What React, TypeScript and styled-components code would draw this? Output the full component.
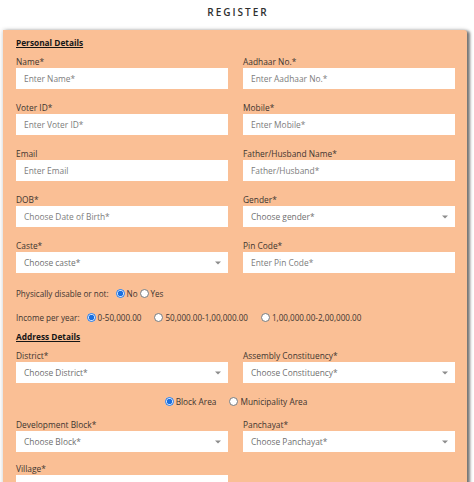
import * as React from "react";
import styled, { createGlobalStyle } from "styled-components";

const GlobalStyle = createGlobalStyle`
  html, body {
    margin: 0;
    padding: 0;
    background: #ffffff;
    font-family: "Open Sans", "Noto Sans", "Liberation Sans", sans-serif;
  }
`;

type FieldDef = { label: string; placeholder: string; select?: boolean };

const personal: FieldDef[] = [
  { label: "Name*", placeholder: "Enter Name*" },
  { label: "Aadhaar No.*", placeholder: "Enter Aadhaar No.*" },
  { label: "Voter ID*", placeholder: "Enter Voter ID*" },
  { label: "Mobile*", placeholder: "Enter Mobile*" },
  { label: "Email", placeholder: "Enter Email" },
  { label: "Father/Husband Name*", placeholder: "Father/Husband*" },
  { label: "DOB*", placeholder: "Choose Date of Birth*" },
  { label: "Gender*", placeholder: "Choose gender*", select: true },
  { label: "Caste*", placeholder: "Choose caste*", select: true },
  { label: "Pin Code*", placeholder: "Enter Pin Code*" },
];

const incomes = ["0-50,000.00", "50,000.00-1,00,000.00", "1,00,000.00-2,00,000.00"];

function Caret() {
  return (
    <svg width="6" height="4" viewBox="0 0 6 4">
      <path d="M0 0.5 L6 0.5 L3 3.5 Z" fill="#8c8c8c" />
    </svg>
  );
}

function Field({ label, placeholder, select }: FieldDef) {
  return (
    <FieldWrap>
      <Label>{label}</Label>
      {select ? (
        <SelectBox>
          <span>{placeholder}</span>
          <Caret />
        </SelectBox>
      ) : (
        <Input placeholder={placeholder} readOnly />
      )}
    </FieldWrap>
  );
}

export default function App() {
  return (
    <>
      <GlobalStyle />
      <Title>REGISTER</Title>
      <Panel>
        <SectionTitle>Personal Details</SectionTitle>
        <FieldGrid>
          {personal.map((f) => (
            <Field key={f.label} {...f} />
          ))}
        </FieldGrid>

        <RadioRow $top={14}>
          <RowLabel>Physically disable or not:</RowLabel>
          <Option $gap={0}>
            <Radio type="radio" name="disable" defaultChecked />
            No
          </Option>
          <Option $gap={1}>
            <Radio type="radio" name="disable" />
            Yes
          </Option>
        </RadioRow>

        <RadioRow $top={12}>
          <RowLabel>Income per year:</RowLabel>
          {incomes.map((v, i) => (
            <Option key={v} $gap={i === 0 ? 0 : 12}>
              <Radio type="radio" name="income" defaultChecked={i === 0} />
              {v}
            </Option>
          ))}
        </RadioRow>

        <SectionTitle $top={8}>Address Details</SectionTitle>
        <FieldGrid>
          <Field label="District*" placeholder="Choose District*" select />
          <Field label="Assembly Constituency*" placeholder="Choose Constituency*" select />
        </FieldGrid>

        <AreaRow>
          <Option $gap={0}>
            <Radio type="radio" name="area" defaultChecked />
            Block Area
          </Option>
          <Option $gap={12}>
            <Radio type="radio" name="area" />
            Municipality Area
          </Option>
        </AreaRow>

        <FieldGrid $top={12} $rowGap={11}>
          <Field label="Development Block*" placeholder="Choose Block*" select />
          <Field label="Panchayat*" placeholder="Choose Panchayat*" select />
          <Field label="Village*" placeholder="Choose Village*" select />
        </FieldGrid>
      </Panel>
    </>
  );
}

const Title = styled.h1`
  margin: 0 0 6px;
  height: 24px;
  display: flex;
  align-items: center;
  justify-content: center;
  padding-left: 2px;
  font-size: 10px;
  font-weight: 600;
  letter-spacing: 2px;
  color: #2f2f2f;
`;

const Panel = styled.div`
  margin: 0 7px 0 3px;
  min-height: 520px;
  padding: 7px 12px 20px 13px;
  background: #fabf95;
  border-radius: 0 3px 0 0;
  box-shadow: 0 0 4px rgba(0, 0, 0, 0.22), 3px 1px 3px rgba(0, 0, 0, 0.5);
`;

const SectionTitle = styled.div<{ $top?: number }>`
  margin-top: ${(p) => p.$top ?? 0}px;
  font-size: 8.3px;
  line-height: 12px;
  font-weight: 700;
  text-decoration: underline;
  color: #151515;
`;

const FieldGrid = styled.div<{ $top?: number; $rowGap?: number }>`
  display: grid;
  grid-template-columns: 212px 212px;
  column-gap: 15px;
  row-gap: ${(p) => p.$rowGap ?? 13}px;
  margin-top: ${(p) => p.$top ?? 7}px;
`;

const FieldWrap = styled.div`
  display: flex;
  flex-direction: column;
`;

const Label = styled.label`
  font-size: 8.4px;
  line-height: 12px;
  color: #3d3530;
`;

const Input = styled.input`
  box-sizing: border-box;
  height: 21px;
  width: 100%;
  margin: 0;
  padding: 0 8px;
  border: none;
  outline: none;
  background: #ffffff;
  font-family: inherit;
  font-size: 8.4px;
  color: #333;

  &::placeholder {
    color: #7c7c7c;
  }
`;

const SelectBox = styled.div`
  box-sizing: border-box;
  height: 21px;
  display: flex;
  align-items: center;
  justify-content: space-between;
  padding: 0 7px 0 8px;
  background: #ffffff;
  font-size: 8.4px;
  color: #6f6f6f;
`;

const RadioRow = styled.div<{ $top: number }>`
  display: flex;
  align-items: center;
  margin-top: ${(p) => p.$top}px;
  height: 12px;
  font-size: 8.1px;
  color: #3d3530;
`;

const RowLabel = styled.span`
  margin-right: 6px;
`;

const Option = styled.label<{ $gap: number }>`
  display: inline-flex;
  align-items: center;
  margin-left: ${(p) => p.$gap}px;
`;

const Radio = styled.input`
  width: 9px;
  height: 9px;
  margin: 0 2px 0 1px;
  accent-color: #1a6fe0;
`;

const AreaRow = styled.div`
  display: flex;
  justify-content: center;
  align-items: center;
  margin-top: 12px;
  height: 12px;
  font-size: 8.3px;
  color: #3d3530;
`;
